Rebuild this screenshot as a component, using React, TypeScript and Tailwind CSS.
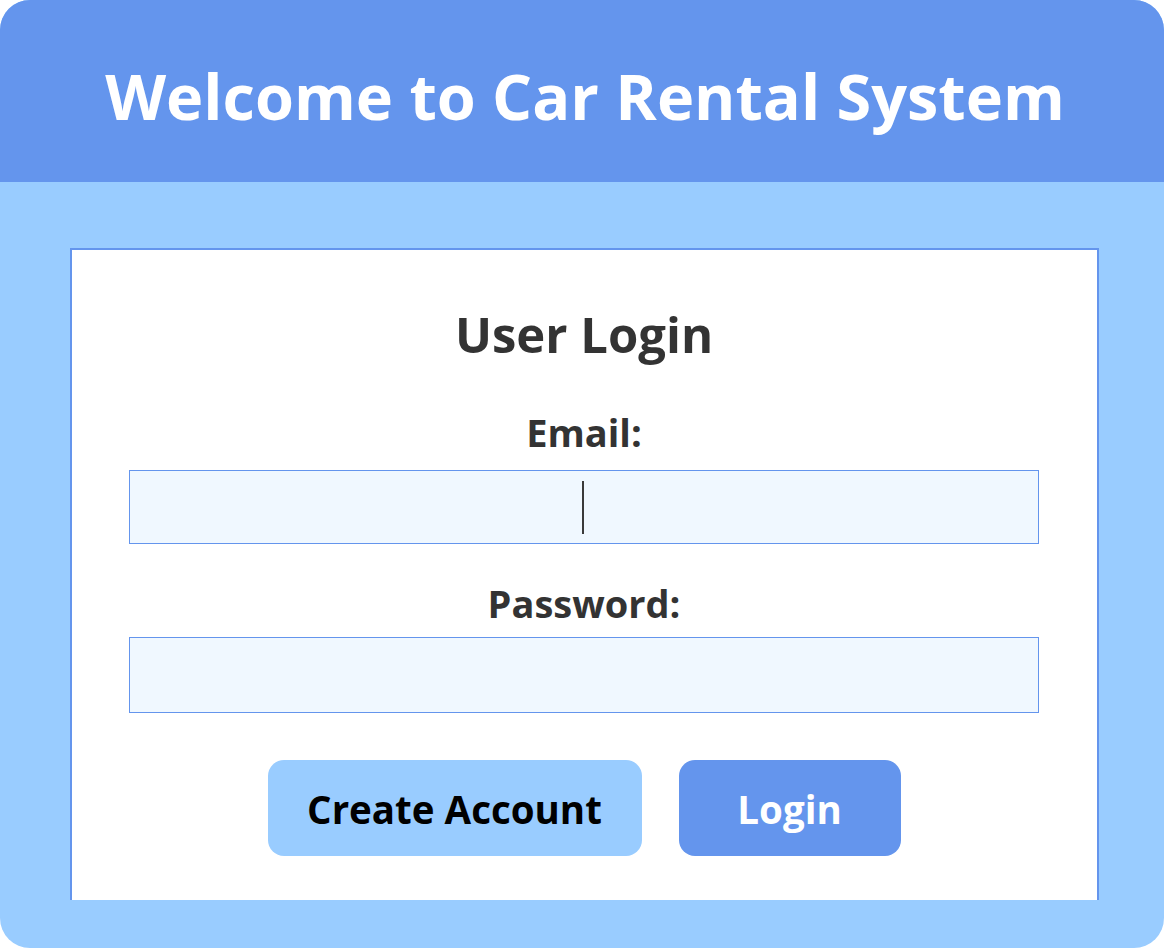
import React from "react";

export default function App() {
  return (
    <div className="w-[1164px] h-[948px] bg-white">
      <div className="w-full h-full rounded-[30px] overflow-hidden bg-[#99ccff] flex flex-col font-['Open_Sans',sans-serif]">
        <header className="h-[182px] shrink-0 bg-[#6495ed] flex items-center justify-center pt-[8px] pl-[6px]">
          <h1 className="text-white font-bold text-[63px] leading-none">
            Welcome to Car Rental System
          </h1>
        </header>
        <main className="flex-1 min-h-0 flex flex-col pl-[70px] pr-[65px] pt-[66px] pb-[48px]">
          <div className="flex-1 min-h-0 overflow-hidden bg-white border-2 border-b-0 border-[#6495ed] flex flex-col items-center pl-[57px] pr-[58px] pt-[54px]">
            <h2 className="h-[60px] flex items-center text-[49px] font-bold text-[#333333] leading-none">
              User Login
            </h2>
            <label className="mt-[46px] h-[44px] flex items-center text-[38px] font-bold text-[#333333] leading-none">
              Email:
            </label>
            <div className="mt-[16px] w-full h-[74px] relative border border-[#6495ed] bg-[#f0f8ff] flex items-center justify-center">
              <input type="email" className="absolute inset-0 w-full h-full bg-transparent outline-none text-center text-[24px]" />
              <span className="pointer-events-none w-[2px] h-[53px] bg-[#3a3a3a] mr-[3px]" />
            </div>
            <label className="mt-[37px] h-[44px] flex items-center text-[38px] font-bold text-[#333333] leading-none">
              Password:
            </label>
            <div className="mt-[12px] w-full h-[76px] border border-[#6495ed] bg-[#f0f8ff]">
              <input type="password" className="w-full h-full bg-transparent outline-none text-center text-[24px]" />
            </div>
            <div className="mt-[47px] flex gap-[37px]">
              <button className="w-[374px] h-[96px] rounded-[16px] bg-[#99ccff] text-black text-[38.5px] font-bold leading-none pt-[2px]">
                Create Account
              </button>
              <button className="w-[222px] h-[96px] rounded-[16px] bg-[#6495ed] text-white text-[38.5px] font-bold leading-none pt-[2px]">
                Login
              </button>
            </div>
          </div>
        </main>
      </div>
    </div>
  );
}
